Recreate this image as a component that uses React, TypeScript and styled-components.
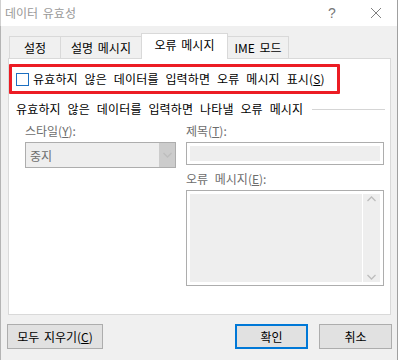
import React from 'react';
import styled, { createGlobalStyle } from 'styled-components';

const GlobalStyle = createGlobalStyle`
  html, body {
    margin: 0;
    padding: 0;
    background: #fff;
  }
  body {
    font-family: "Noto Sans CJK KR", "Noto Sans", sans-serif;
    font-size: 12px;
    color: #000;
  }
`

const Window = styled.div`
  width: 398px;
  height: 360px;
  background: #f0f0f0;
  box-shadow: inset 1px 0 #b4b4b4, inset -1px 0 #a0a0a0;
  display: flex;
  flex-direction: column;
`
const TitleBar = styled.div`
  height: 26px;
  background: #fff;
  display: flex;
  align-items: center;
  padding-left: 5px;
  box-shadow: inset 1px 0 #d0d0d0, inset -1px 0 #a0a0a0;
`
const Title = styled.div`
  flex: 1;
  color: #999;
  font-size: 12px;
  line-height: 16px;
  word-spacing: 2px;
`
const HelpButton = styled.div`
  width: 20px;
  color: #777;
  font-family: "Liberation Sans", sans-serif;
  font-size: 14px;
  text-align: center;
  margin-right: 28px;
`
const CloseButton = styled.div`
  width: 12px;
  height: 12px;
  margin-right: 16px;
  display: flex;
`

const TabStrip = styled.div`
  display: flex;
  align-items: flex-end;
  margin: 7px 0 0 9px;
  height: 25px;
`
const Tab = styled.div<{ $active?: boolean; $w: number }>`
  width: ${p => p.$w}px;
  box-sizing: border-box;
  height: ${p => (p.$active ? 26 : 22)}px;
  margin-bottom: ${p => (p.$active ? -1 : 0)}px;
  margin-left: -1px;
  &:first-child { margin-left: 0; }
  background: ${p => (p.$active ? '#fff' : '#f0f0f0')};
  border: 1px solid #d9d9d9;
  border-bottom: none;
  position: relative;
  z-index: ${p => (p.$active ? 2 : 1)};
  display: flex;
  align-items: center;
  justify-content: center;
  padding-bottom: ${p => (p.$active ? 3 : 0)}px;
  line-height: 16px;
  word-spacing: 2px;
`

const Panel = styled.div`
  margin: 0 7px 0 8px;
  height: 257px;
  box-sizing: border-box;
  background: #fff;
  border: 1px solid #d9d9d9;
  padding-top: 5px;
`
const Highlight = styled.div`
  width: 331px;
  height: 30px;
  box-sizing: border-box;
  border: 3px solid #ec1c24;
  border-radius: 1px;
  display: flex;
  align-items: center;
  padding-left: 4px;
  gap: 4px;
`
const CheckBox = styled.div`
  width: 13px;
  height: 13px;
  box-sizing: border-box;
  border: 1px solid #1c6fc1;
  background: #fff;
  margin-top: 1px;
`
const Label = styled.span<{ $disabled?: boolean }>`
  line-height: 16px;
  color: ${p => (p.$disabled ? '#6d6d6d' : '#000')};
  white-space: nowrap;
  word-spacing: 4px;
  letter-spacing: 0.15px;
`
const GroupHeader = styled.div`
  display: flex;
  align-items: center;
  gap: 9px;
  margin: 7px 5px 0 7px;
`
const GroupLine = styled.div`
  flex: 1;
  height: 1px;
  background: #d5d5d5;
`
const Fields = styled.div`
  display: grid;
  grid-template-columns: 151px 198px;
  column-gap: 10px;
  padding-left: 16px;
  margin-top: 6px;
`
const Column = styled.div`
  display: flex;
  flex-direction: column;
`
const FieldLabel = styled(Label)`
  display: block;
  margin-bottom: 3px;
  letter-spacing: 0;
`
const Select = styled.div`
  height: 26px;
  box-sizing: border-box;
  border: 1px solid #adadad;
  background: #eeeeee;
  display: flex;
  align-items: stretch;
`
const SelectValue = styled.div`
  flex: 1;
  padding-left: 4px;
  display: flex;
  align-items: center;
  color: #6d6d6d;
`
const SelectArrow = styled.div`
  width: 16px;
  background: #cccccc;
  display: flex;
  align-items: center;
  justify-content: center;
`
const TextBox = styled.div<{ $h: number }>`
  height: ${p => p.$h}px;
  box-sizing: border-box;
  border: 1px solid #adadad;
  background: #fff;
  padding: 3px;
  display: flex;
  gap: 1px;
`
const Fill = styled.div`
  flex: 1;
  background: #eeeeee;
`
const ScrollBar = styled.div`
  width: 17px;
  background: #eeeeee;
  display: flex;
  flex-direction: column;
  justify-content: space-between;
  align-items: center;
  padding: 2px 0;
`
const MessageLabel = styled(FieldLabel)`
  margin-top: 6px;
`

const Buttons = styled.div`
  display: flex;
  margin: 9px 6px 0 7px;
  gap: 11px;
`
const Button = styled.button<{ $w: number; $default?: boolean }>`
  width: ${p => p.$w}px;
  height: 25px;
  box-sizing: border-box;
  background: #e1e1e1;
  border: ${p => (p.$default ? '2px solid #0078d7' : '1px solid #adadad')};
  font-family: inherit;
  font-size: 12px;
  color: #000;
  padding: 0;
  line-height: 16px;
  word-spacing: 2px;
`
const Spacer = styled.div`
  flex: 1;
`

const Chevron = ({ up }: { up?: boolean }) => (
  <svg width="9" height="6" viewBox="0 0 9 6">
    <path d={up ? 'M0.5 5 L4.5 1 L8.5 5' : 'M0.5 1 L4.5 5 L8.5 1'} fill="none" stroke="#bdbdbd" strokeWidth="1.3" />
  </svg>
)

export default function App() {
  return (
    <>
      <GlobalStyle />
      <Window>
        <TitleBar>
          <Title>데이터 유효성</Title>
          <HelpButton>?</HelpButton>
          <CloseButton>
            <svg width="12" height="12" viewBox="0 0 12 12">
              <path d="M1 1 L11 11 M11 1 L1 11" stroke="#808080" strokeWidth="1" />
            </svg>
          </CloseButton>
        </TitleBar>
        <TabStrip>
          <Tab $w={52}>설정</Tab>
          <Tab $w={82}>설명 메시지</Tab>
          <Tab $w={87} $active>오류 메시지</Tab>
          <Tab $w={62}>IME 모드</Tab>
        </TabStrip>
        <Panel>
          <Highlight>
            <CheckBox />
            <Label>유효하지 않은 데이터를 입력하면 오류 메시지 표시(<u>S</u>)</Label>
          </Highlight>
          <GroupHeader>
            <Label>유효하지 않은 데이터를 입력하면 나타낼 오류 메시지</Label>
            <GroupLine />
          </GroupHeader>
          <Fields>
            <Column>
              <FieldLabel $disabled>스타일(<u>Y</u>):</FieldLabel>
              <Select>
                <SelectValue>중지</SelectValue>
                <SelectArrow>
                  <Chevron />
                </SelectArrow>
              </Select>
            </Column>
            <Column>
              <FieldLabel $disabled>제목(<u>T</u>):</FieldLabel>
              <TextBox $h={23}>
                <Fill />
              </TextBox>
              <MessageLabel $disabled>오류 메시지(<u>E</u>):</MessageLabel>
              <TextBox $h={96}>
                <Fill />
                <ScrollBar>
                  <Chevron up />
                  <Chevron />
                </ScrollBar>
              </TextBox>
            </Column>
          </Fields>
        </Panel>
        <Buttons>
          <Button $w={96}>모두 지우기(<u>C</u>)</Button>
          <Spacer />
          <Button $w={73} $default>확인</Button>
          <Button $w={73}>취소</Button>
        </Buttons>
      </Window>
    </>
  );
}
